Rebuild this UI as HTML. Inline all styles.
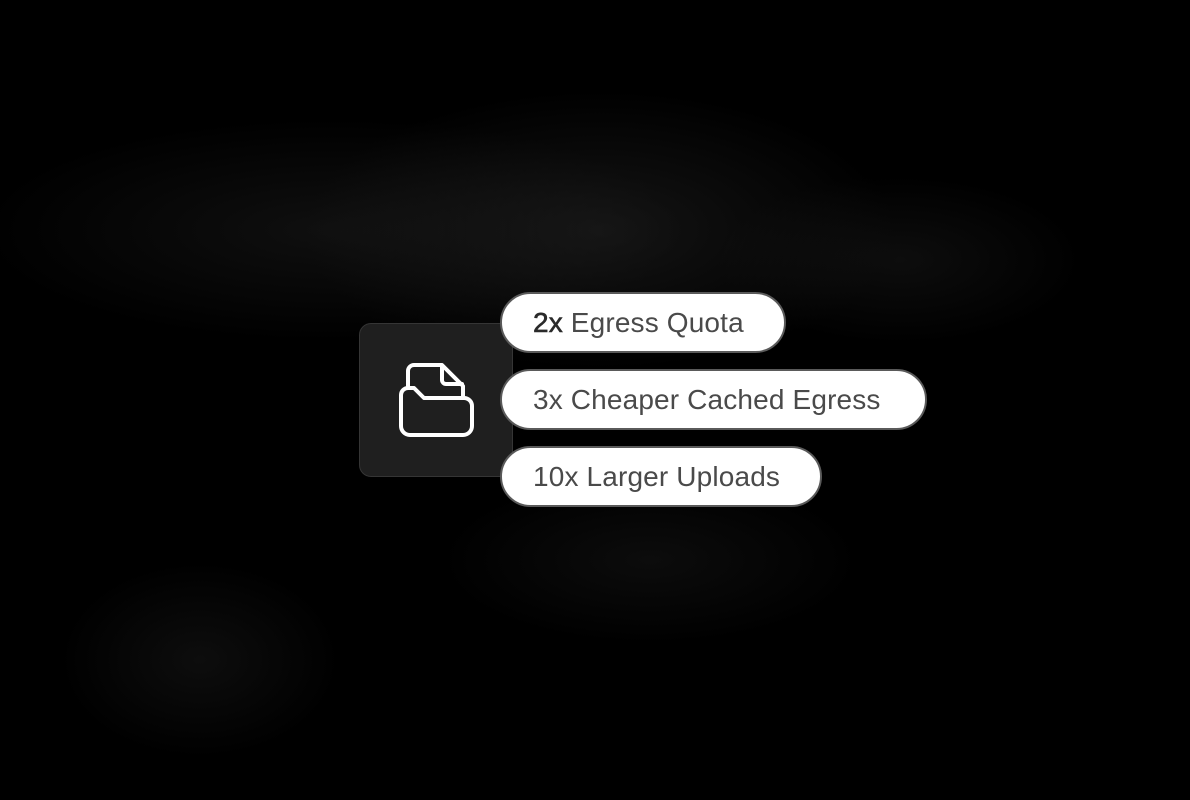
<!DOCTYPE html>
<html><head><meta charset="utf-8"><style>
html,body{margin:0;padding:0}
body{width:1190px;height:800px;overflow:hidden;position:relative;background:#000;font-family:"Liberation Sans",sans-serif}
.bg{position:absolute;inset:0;background:
radial-gradient(ellipse 420px 200px at 600px 230px,rgba(40,40,40,.5),transparent 70%),
radial-gradient(ellipse 500px 160px at 330px 230px,rgba(28,28,28,.55),transparent 70%),
radial-gradient(ellipse 260px 120px at 900px 260px,rgba(26,26,26,.5),transparent 70%),
radial-gradient(ellipse 200px 140px at 200px 660px,rgba(22,22,22,.6),transparent 70%),
radial-gradient(ellipse 300px 120px at 650px 560px,rgba(20,20,20,.6),transparent 70%);}
.box{position:absolute;left:359px;top:323px;width:154px;height:154px;background:#1f1f1f;border:1px solid #353535;border-radius:12px;box-sizing:border-box}
.pill{position:absolute;left:500px;height:61px;box-sizing:border-box;background:#fff;border:2px solid #5a5a5a;border-radius:31px;color:#4a4a4a;font-size:28px;line-height:57px;padding-left:31px;letter-spacing:.15px;white-space:nowrap}
.pill b{color:#2a2a2a;font-weight:normal;-webkit-text-stroke:.6px #2a2a2a}
</style></head><body>
<div class="bg"></div>
<div class="box"></div>
<svg style="position:absolute;left:0;top:0" width="1190" height="800">
<g fill="none" stroke="#fff" stroke-width="4" stroke-linejoin="round" stroke-linecap="round">
<path d="M408 386 V371 a6 6 0 0 1 6-6 H442 L463 386 V397"/>
<path d="M442 366 V380 a4 4 0 0 0 4 4 H462"/>
<path d="M401 426 V395 a7 7 0 0 1 7-7 H414 L424 398 H464 a8 8 0 0 1 8 8 V426 a9 9 0 0 1-9 9 H410 a9 9 0 0 1-9-9 Z"/>
</g></svg>
<div class="pill" style="top:292px;width:286px"><b>2x</b> Egress Quota</div>
<div class="pill" style="top:369px;width:427px">3x Cheaper Cached Egress</div>
<div class="pill" style="top:446px;width:322px">10x Larger Uploads</div>
</body></html>
